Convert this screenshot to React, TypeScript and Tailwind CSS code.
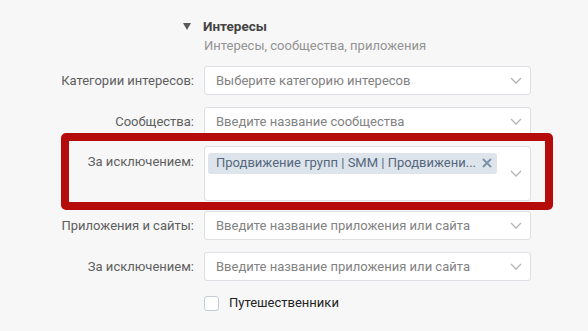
import React from "react";

function Chevron() {
  return (
    <svg width="12" height="7" viewBox="0 0 12 7" className="shrink-0">
      <path d="M1 1l5 5 5-5" fill="none" stroke="#b4b4b4" strokeWidth="1.3" />
    </svg>
  );
}

function Row({ label, placeholder, mt }: { label: string; placeholder: string; mt: string }) {
  return (
    <div className={`flex items-center ${mt}`}>
      <div className="w-[194px] text-right text-[13px] text-[#5e5e5e] leading-[18px]">{label}</div>
      <div className="ml-[10px] w-[327px] h-[29px] bg-white border border-[#dcdfe3] rounded-[3px] flex items-center pl-[11px] pr-[8px]">
        <span className="flex-1 text-[13px] text-[#828282] leading-[18px] whitespace-nowrap">{placeholder}</span>
        <Chevron />
      </div>
    </div>
  );
}

export default function App() {
  return (
    <div
      className="w-[588px] h-[331px] bg-[#f7f7f7] overflow-hidden pt-[16px]"
      style={{ fontFamily: "Roboto, 'Noto Sans', sans-serif" }}
    >
      <div className="flex items-center h-[18px] mt-[1px]">
        <div className="w-[194px] flex justify-end pr-[3px]">
          <svg width="8" height="7" viewBox="0 0 8 7">
            <path d="M0 0h8L4 7z" fill="#5a5a5a" />
          </svg>
        </div>
        <div className="ml-[9px] text-[13.5px] font-bold text-[#444444] leading-[18px]">Интересы</div>
      </div>
      <div className="flex mt-[2px] h-[18px]">
        <div className="w-[194px]" />
        <div className="ml-[10px] text-[13px] text-[#939393] leading-[18px]">Интересы, сообщества, приложения</div>
      </div>

      <Row label="Категории интересов:" placeholder="Выберите категорию интересов" mt="mt-[11px]" />
      <Row label="Сообщества:" placeholder="Введите название сообщества" mt="mt-[12px]" />

      <div className="relative flex items-start mt-[10px]">
        <div className="w-[194px] text-right text-[13px] text-[#5e5e5e] leading-[18px] pt-[7px]">За исключением:</div>
        <div className="ml-[10px] w-[327px] h-[55px] bg-white border border-[#dcdfe3] rounded-[3px] flex items-center pl-[3px] pr-[8px]">
          <div className="flex-1 self-start pt-[3px]">
            <div className="inline-flex items-center h-[21px] bg-[#dde4eb] rounded-[3px] pl-[8px] pr-[5px]">
              <span className="text-[13px] text-[#55677d] leading-[18px] whitespace-nowrap">Продвижение групп | SMM | Продвижени...</span>
              <svg width="10" height="10" viewBox="0 0 10 10" className="ml-[6px]">
                <path d="M1 1l8 8M9 1l-8 8" stroke="#7a8ea4" strokeWidth="1.8" />
              </svg>
            </div>
          </div>
          <Chevron />
        </div>
        <div className="absolute left-[61px] top-[-13px] w-[492px] h-[77px] border-[8px] border-[#b60b0b] rounded-[5px] pointer-events-none" />
      </div>

      <Row label="Приложения и сайты:" placeholder="Введите название приложения или сайта" mt="mt-[10px]" />
      <Row label="За исключением:" placeholder="Введите название приложения или сайта" mt="mt-[12px]" />

      <div className="flex items-center mt-[13px]">
        <div className="w-[204px]" />
        <div className="w-[15px] h-[15px] bg-white border border-[#c2ccd6] rounded-[3px]" />
        <div className="ml-[10px] text-[13px] text-[#222222] leading-[18px]">Путешественники</div>
      </div>
    </div>
  );
}
